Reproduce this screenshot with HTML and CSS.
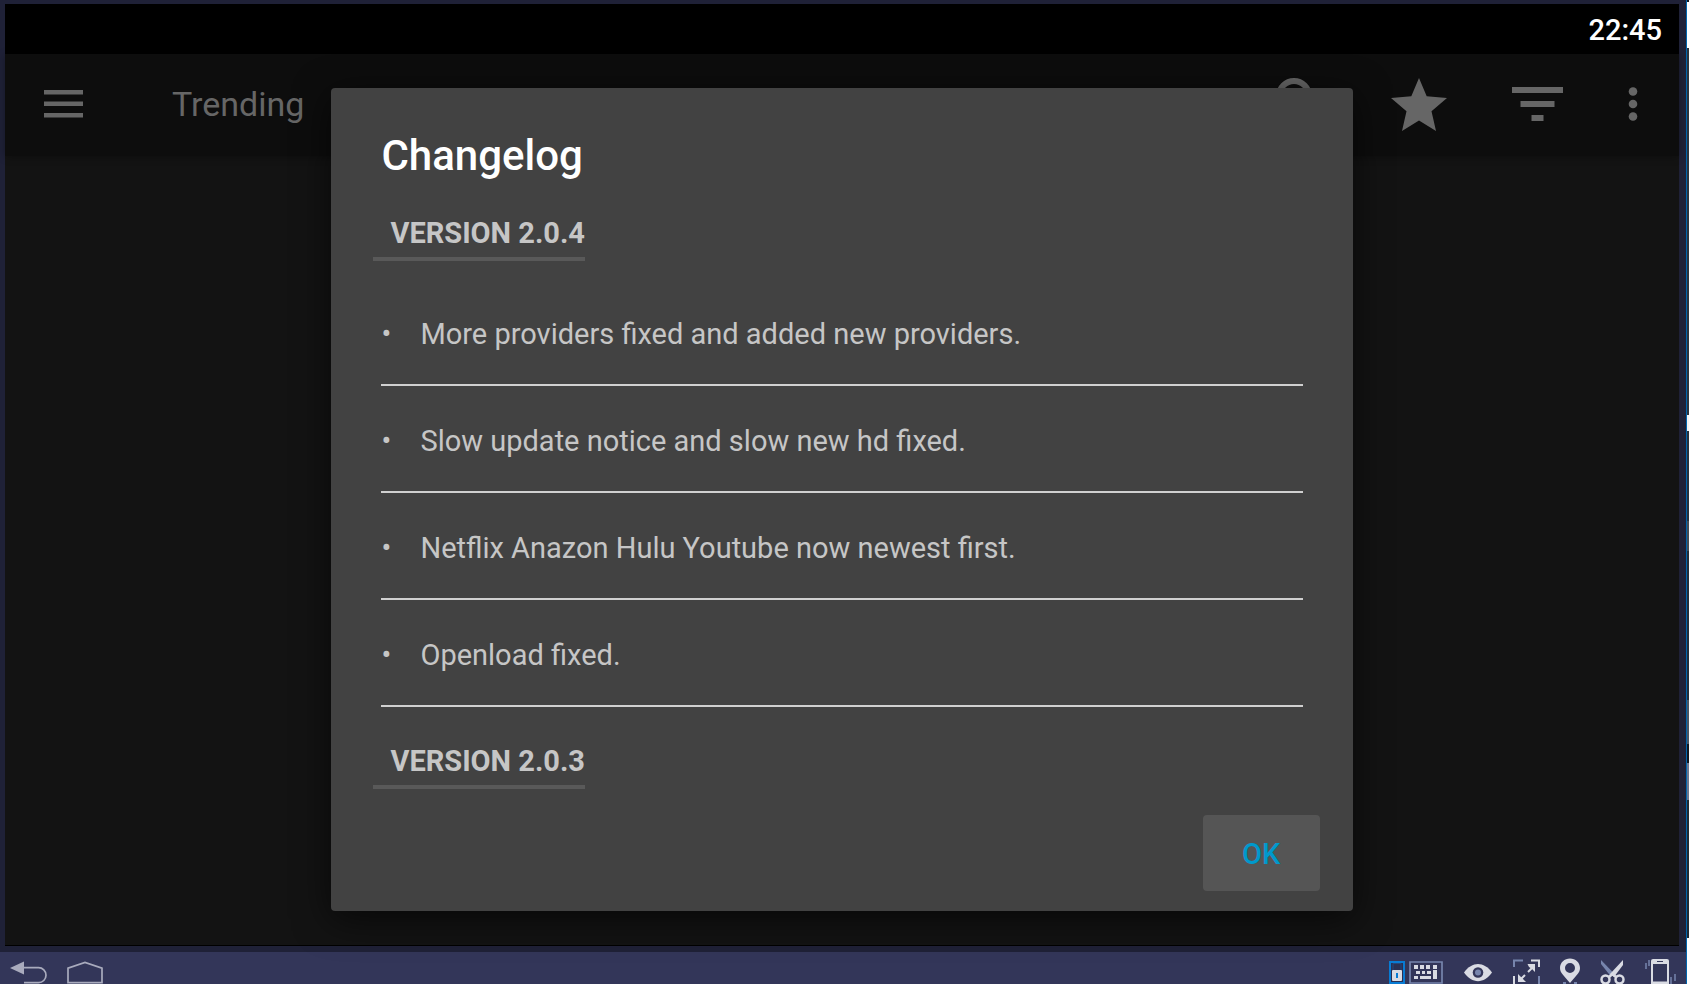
FILE: index.html
```html
<!DOCTYPE html>
<html lang="en">
<head>
<meta charset="utf-8">
<title>Trending</title>
<link rel="stylesheet" href="styles.css">
</head>
<body>
<div class="desktop">
  <div class="emulator">
    <div class="screen">
      <div class="status-bar"><time>22:45</time></div>
      <div class="app">
        <header class="toolbar">
          <button class="icon-button" aria-label="Menu">
            <svg width="39" height="28" viewBox="0 0 39 28"><path d="M0 0h39v4.500H0zM0 11.500h39V16H0zM0 23h39v4.500H0z"/></svg>
          </button>
          <h1 class="toolbar-title">Trending</h1>
          <div class="toolbar-actions">
            <button class="icon-button" aria-label="Search">
              <svg width="50" height="52" viewBox="0 0 50 52"><circle cx="18" cy="18" r="15" fill="none" stroke="#666" stroke-width="6"/><path d="M28 32l4-4 18 18-4 4z"/></svg>
            </button>
            <button class="icon-button" aria-label="Favorites">
              <svg width="56" height="53" viewBox="0 0 56 53"><path d="M28 0l7.700 18.200L56 20 40.500 33.300 45 53 28 42.500 11 53l4.500-19.700L0 20l20.300-1.800z"/></svg>
            </button>
            <button class="icon-button" aria-label="Filter">
              <svg width="51" height="34" viewBox="0 0 51 34"><path d="M0 0h51v6H0zM8.500 14h34v6h-34zM19.500 28h12v6h-12z"/></svg>
            </button>
            <button class="icon-button" aria-label="More options">
              <svg width="10" height="34" viewBox="0 0 10 34"><circle cx="5" cy="4.500" r="4.300"/><circle cx="5" cy="17" r="4.300"/><circle cx="5" cy="29.500" r="4.300"/></svg>
            </button>
          </div>
        </header>
        <div class="overlay">
          <section class="dialog" role="dialog" aria-labelledby="dialog-title">
            <h2 class="dialog-title" id="dialog-title">Changelog</h2>
            <h3 class="version">VERSION 2.0.4</h3>
            <ul class="changes">
              <li>More providers fixed and added new providers.</li>
              <li>Slow update notice and slow new hd fixed.</li>
              <li>Netflix Anazon Hulu Youtube now newest first.</li>
              <li>Openload fixed.</li>
            </ul>
            <h3 class="version">VERSION 2.0.3</h3>
            <button class="ok-button">OK</button>
          </section>
        </div>
      </div>
    </div>
    <footer class="taskbar">
      <div class="task-group nav-group">
        <button class="icon-button" aria-label="Back">
          <svg width="38" height="32" viewBox="0 0 38 32"><path d="M0 16L14 9.500v13z" fill="#a9abbd"/><path d="M14 15.700h14.500a7.500 7.500 0 0 1 0 15H14" fill="none" stroke="#a9abbd" stroke-width="1.700"/></svg>
        </button>
        <button class="icon-button" aria-label="Home">
          <svg width="36" height="32" viewBox="0 0 36 32"><path d="M1 30.700V16.200L18 10.500l17 5.700v14.500z" fill="none" stroke="#a9abbd" stroke-width="1.700"/></svg>
        </button>
      </div>
      <div class="task-group tool-group">
        <div class="input-tools">
          <button class="icon-button" aria-label="Lock mouse">
            <svg width="16" height="32" viewBox="0 0 16 32"><path d="M1 10h14v21H1z" fill="#2a3053" stroke="#087bd3" stroke-width="2"/><path d="M4 18V11.500h8V18" fill="none" stroke="#25477d"/><rect x="3" y="18" width="10" height="11" rx="1" fill="#d9dbe3"/><path d="M7 21h2v5H7z" fill="#087bd3"/></svg>
          </button>
          <button class="icon-button" aria-label="Keyboard">
            <svg width="34" height="32" viewBox="0 0 34 32"><path d="M1 10h32v21H1z" fill="none" stroke="#7785ad" stroke-width="1.700"/><path d="M5 13h4v4H5zM11 13h4v4h-4zM17 13h4v4h-4zM24 13h4v4h-4zM7 19h4v3H7zM13 19h3v3h-3zM18 19h4v3h-4zM24 18h4v9h-4zM5 24h4v3H5zM11 24h11v3H11z" fill="#d9dbe3"/></svg>
          </button>
        </div>
        <button class="icon-button" aria-label="Toggle controls">
          <svg width="30" height="32" viewBox="-1 0 30 32"><path d="M0 20.500C8 9 20 9 28 20.500 20 32 8 32 0 20.500z" fill="#d9dbe3"/><circle cx="14" cy="20.500" r="5.300" fill="#333659"/><circle cx="14" cy="20.500" r="3" fill="#7785ad"/></svg>
        </button>
        <button class="icon-button" aria-label="Full screen">
          <svg width="27" height="32" viewBox="0 0 27 32"><g fill="none" stroke-width="2"><path d="M1 15V8.500h9M26 24v10h-9" stroke="#7785ad"/><path d="M18 8.500h8V15M1 24v10h9" stroke="#d9dbe3"/><path d="M15 20l6-6M12 23l-6 6" stroke="#d9dbe3"/></g><path d="M14.500 12h7.500v8l-3-3-3-2zM5 22v8h8l-3-3-2-2z" fill="#d9dbe3"/></svg>
        </button>
        <button class="icon-button" aria-label="Location">
          <svg width="20" height="32" viewBox="0 0 20 32"><path fill-rule="evenodd" d="M10 6.500C4.500 6.500 0 10.500 0 16c0 5 4 7.500 10 15 6-7.500 10-10 10-15 0-5.500-4.500-9.500-10-9.500zM10 11a5 5 0 1 1 0 10 5 5 0 0 1 0-10z" fill="#d9dbe3"/><path d="M3 31h3M14 31h3" stroke="#7785ad" stroke-width="2"/></svg>
        </button>
        <button class="icon-button" aria-label="Screenshot">
          <svg width="25" height="32" viewBox="0 0 25 32"><path d="M1 8v4l9.500 12 4-2z" fill="#7785ad"/><path d="M23 8v5l-9 12-4-3z" fill="#d9dbe3"/><g fill="none" stroke="#d9dbe3" stroke-width="2.500"><circle cx="5.500" cy="27.500" r="4"/><circle cx="19.500" cy="27.500" r="4"/><path d="M9 25l3.500-3 3.500 3"/></g></svg>
        </button>
        <button class="icon-button" aria-label="Shake">
          <svg width="31" height="32" viewBox="1 0 31 32"><rect x="7" y="7" width="18" height="30" rx="2" fill="#d9dbe3"/><path d="M9 12h14v17.500H9z" fill="#333659"/><path d="M13 9.500h6" stroke="#333659"/><path d="M5 8v6M2 11v6M27 25v8M31 22v7" stroke="#7785ad" stroke-width="1.500"/></svg>
        </button>
      </div>
    </footer>
  </div>
  <div class="background-window"></div>
</div>
</body>
</html>
```
FILE: styles.css
```css
* { box-sizing: border-box; }

body {
  margin: 0;
  background: #1f2137;
  font-family: Roboto, "Liberation Sans", sans-serif;
}

h1, h2, h3, ul { margin: 0; padding: 0; }

svg { display: block; }

.desktop {
  display: flex;
  height: 100vh;
  overflow: hidden;
}

.emulator {
  flex: 1;
  display: flex;
  flex-direction: column;
  min-width: 0;
  background: #1f2137;
}

.background-window {
  width: 3px;
  border-left: 1px solid #0066ae;
  background: linear-gradient(
    #171a20 2px, #fff 2px 48px, #2c333c 48px 415px, #f5f5f5 415px 431px,
    #27313c 431px 521px, #444c55 521px 551px, #232d38 551px 700px,
    #4a5564 700px 744px, #11161e 744px 763px, #6b7790 763px 800px,
    #202a34 800px 938px, #fff 938px
  );
}

.screen {
  flex: 1;
  display: flex;
  flex-direction: column;
  min-height: 0;
  margin: 4px 7px 6px 5px;
  border-bottom: 1px solid #000;
  background: #131313;
}

.status-bar {
  display: flex;
  align-items: center;
  justify-content: flex-end;
  height: 50px;
  padding: 2px 17px 0 0;
  background: #000;
  color: #fff;
  font-size: 29px;
  font-weight: 500;
  line-height: 36px;
}

.app {
  position: relative;
  flex: 1;
  min-height: 0;
}

.toolbar {
  display: flex;
  align-items: center;
  height: 102px;
  padding: 0 41px 2px 39px;
  background: #0d0d0d;
  box-shadow: 0 1px 8px rgba(0, 0, 0, 0.3);
}

.icon-button {
  display: block;
  padding: 0;
  border: 0;
  background: none;
  fill: #666;
}

.toolbar-title {
  margin-left: 89px;
  color: #666;
  font-size: 34px;
  font-weight: 400;
  line-height: 40px;
}

.toolbar-actions {
  display: flex;
  align-items: center;
  gap: 65px;
  margin-left: auto;
}

.overlay {
  position: absolute;
  inset: 0;
  display: flex;
  align-items: center;
  justify-content: center;
}

.dialog {
  display: flex;
  flex-direction: column;
  align-items: flex-start;
  width: 61%;
  padding: 43px 33px 20px 42px;
  border-radius: 4px;
  background: #424242;
  box-shadow: 0 8px 36px rgba(0, 0, 0, 0.6);
  color: #c6c6c6;
  font-size: 29px;
  line-height: 36px;
}

.dialog-title {
  margin: 0 8px 34px;
  color: #fff;
  font-size: 42px;
  font-weight: 500;
  line-height: 50px;
}

.version {
  padding: 0 0 6px 17px;
  border-bottom: 4px solid #595959;
  font-size: 29px;
  font-weight: 700;
}

.changes {
  align-self: stretch;
  margin: 18px 17px 36px 8px;
  list-style: none;
}

.changes li {
  display: flex;
  padding: 37px 0 32px;
  border-bottom: 2px solid #d0d0d0;
}

.changes li::before {
  content: "•";
  width: 39px;
}

.ok-button {
  align-self: flex-end;
  width: 117px;
  height: 76px;
  margin-top: 26px;
  padding-top: 3px;
  border: 0;
  border-radius: 4px;
  background: #555;
  color: #0099cc;
  font: 500 29px/36px Roboto, "Liberation Sans", sans-serif;
}

.taskbar {
  display: flex;
  justify-content: space-between;
  height: 32px;
  padding: 0 10px;
  background: #333659;
}

.task-group { display: flex; }

.nav-group { gap: 19px; }

.tool-group { gap: 20px; }

.input-tools {
  display: flex;
  gap: 4px;
}
```
